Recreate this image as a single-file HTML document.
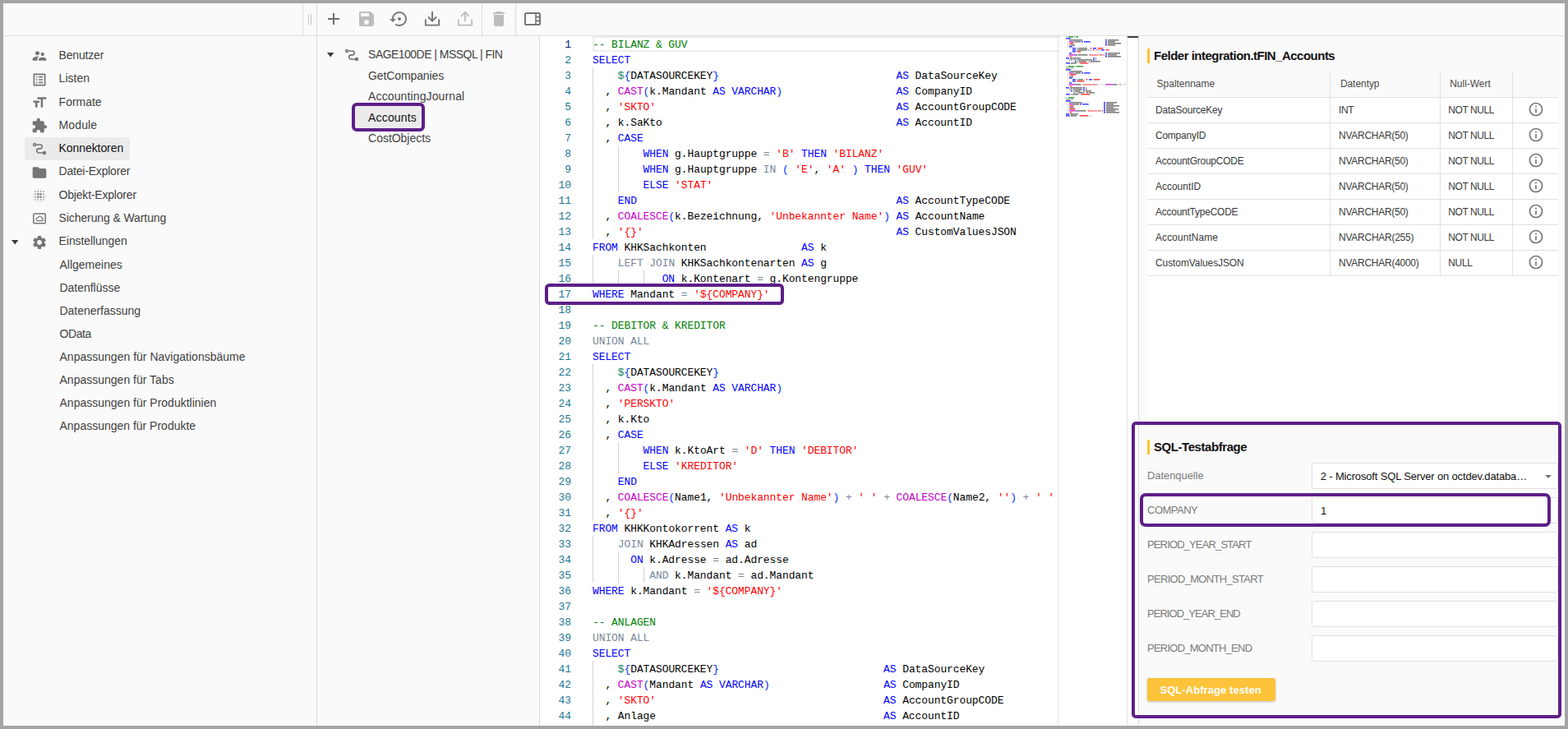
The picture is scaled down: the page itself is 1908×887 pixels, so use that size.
<!DOCTYPE html>
<html lang="de"><head><meta charset="utf-8"><title>Konnektoren</title>
<style>
*{box-sizing:border-box}
html,body{margin:0;padding:0}
body{width:1908px;height:887px;overflow:hidden;background:#a5a5a5;font-family:"Liberation Sans", Arial, sans-serif;position:relative}
#app{position:absolute;left:4px;top:4px;width:1900px;height:879px;background:#fafafa;overflow:hidden}
#root{position:absolute;left:0;top:0;width:1908px;height:887px;overflow:hidden}
.t{position:absolute;white-space:pre;line-height:20px;height:20px;font-size:14px}
.b{position:absolute}
.vl{position:absolute;width:1px;background:#dcdcdc}
.hl{position:absolute;height:1px;background:#dcdcdc}
svg{position:absolute;overflow:visible}
#ed{position:absolute;left:657px;top:44px;width:714px;height:839px;background:#fff;overflow:hidden}
.ln{position:absolute;left:0;width:38px;text-align:right;color:#237893;font:13px/19px "Liberation Mono", "DejaVu Sans Mono", monospace;height:19px;white-space:pre;letter-spacing:-0.1px}
.cl{position:absolute;left:64px;color:#000;font:13px/19px "Liberation Mono", "DejaVu Sans Mono", monospace;height:19px;white-space:pre;letter-spacing:-0.104px}
.cl i{font-style:normal}
.kw{color:#0000ff}.op{color:#778899}.fn{color:#c700c7}.str{color:#ff0000}.com{color:#008000}.br{color:#0431fa}.num{color:#098658}
.ig{position:absolute;width:1px;height:19px;background:#d3d3d3}
.inp{position:absolute;left:1596px;width:300px;height:32px;background:#fff;border:1px solid #e0e0e0;border-radius:3px}
</style></head>
<body>
<div id="app"></div>
<div id="root">
<header id="toolbar">
<div class="hl" style="left:4px;top:43px;width:1900px;background:#dedede"></div>
<div class="vl" style="left:368px;top:4px;height:40px"></div>
<div class="vl" style="left:385px;top:4px;height:879px"></div>
<div class="vl" style="left:586px;top:4px;height:40px"></div>
<div class="vl" style="left:627px;top:4px;height:40px"></div>
<div class="vl" style="left:656px;top:44px;height:839px"></div>
<div class="b" style="left:375px;top:17px;width:1px;height:13px;background:#c4c4c4"></div><div class="b" style="left:378px;top:17px;width:1px;height:13px;background:#c4c4c4"></div>
<svg style="left:394px;top:11px" width="24" height="24" viewBox="0 0 24 24"><path fill="#6e6e6e" d="M19 13h-6v6h-2v-6H5v-2h6V5h2v6h6v2z"/></svg>
<svg style="left:434px;top:11px" width="24" height="24" viewBox="0 0 24 24"><path fill="#bdbdbd" d="M17 3H5c-1.11 0-2 .9-2 2v14c0 1.1.89 2 2 2h14c1.1 0 2-.9 2-2V7l-4-4zm-5 16c-1.66 0-3-1.34-3-3s1.34-3 3-3 3 1.34 3 3-1.34 3-3 3zm3-10H5V5h10v4z"/></svg>
<svg style="left:474px;top:11px" width="24" height="24" viewBox="0 0 24 24"><path fill="#7a7a7a" d="M14 12c0-1.1-.9-2-2-2s-2 .9-2 2 .9 2 2 2 2-.9 2-2zm-2-9c-4.97 0-9 4.03-9 9H0l4 4 4-4H5c0-3.87 3.13-7 7-7s7 3.13 7 7-3.13 7-7 7c-1.51 0-2.91-.49-4.06-1.3l-1.42 1.44C8.04 20.3 9.94 21 12 21c4.97 0 9-4.03 9-9s-4.03-9-9-9z"/></svg>
<svg style="left:516px;top:13px" width="20" height="20" viewBox="0 0 20 20" fill="none" stroke="#757575" stroke-width="1.9" stroke-linecap="round" stroke-linejoin="round"><path d="M1.9 11.2v6.4h16.2v-6.4"/><path d="M10 1.8v10.6"/><path d="M5.6 8l4.4 4.6L14.4 8"/></svg>
<svg style="left:556px;top:13px" width="20" height="20" viewBox="0 0 20 20" fill="none" stroke="#bdbdbd" stroke-width="1.9" stroke-linecap="round" stroke-linejoin="round"><path d="M1.9 11.2v6.4h16.2v-6.4"/><path d="M10 12.6V2"/><path d="M5.6 6.4L10 1.9l4.4 4.5"/></svg>
<svg style="left:595px;top:11px" width="24" height="24" viewBox="0 0 24 24"><path fill="#bdbdbd" d="M6 19c0 1.1.9 2 2 2h8c1.1 0 2-.9 2-2V7H6v12zM19 4h-3.5l-1-1h-5l-1 1H5v2h14V4z"/></svg>
<svg style="left:638px;top:15px" width="20" height="16" viewBox="0 0 20 16"><rect x="1" y="1" width="18" height="14" rx="1.6" fill="none" stroke="#757575" stroke-width="2"/><path d="M14 1v14M14 5.6h5M14 10.4h5" fill="none" stroke="#757575" stroke-width="1.6"/></svg>
</header>
<nav id="nav">
<div class="b" style="left:30px;top:167px;width:128px;height:28px;border-radius:4px;background:#ebebeb"></div>
<svg style="left:38px;top:58px" width="20" height="20" viewBox="0 0 24 24"><path fill="#757575" d="M16.5 12c1.38 0 2.49-1.12 2.49-2.5S17.88 7 16.5 7C15.12 7 14 8.12 14 9.5s1.12 2.5 2.5 2.5zM9 11c1.66 0 2.99-1.34 2.99-3S10.66 5 9 5C7.34 5 6 6.34 6 8s1.34 3 3 3zm7.5 3c-1.83 0-5.5.92-5.5 2.75V19h11v-2.25c0-1.83-3.67-2.75-5.5-2.75zM9 13c-2.33 0-7 1.17-7 3.5V19h7v-2.25c0-.85.33-2.34 2.37-3.47C10.5 13.1 9.66 13 9 13z"/></svg>
<svg style="left:38px;top:87px" width="20" height="20" viewBox="0 0 24 24"><path fill="#757575" d="M19 5v14H5V5h14m1.1-2H3.9c-.5 0-.9.4-.9.9v16.2c0 .4.4.9.9.9h16.2c.4 0 .9-.5.9-.9V3.9c0-.5-.5-.9-.9-.9zM11 7h6v2h-6V7zm0 4h6v2h-6v-2zm0 4h6v2h-6zM7 7h2v2H7zm0 4h2v2H7zm0 4h2v2H7z"/></svg>
<svg style="left:38px;top:115px" width="20" height="20" viewBox="0 0 24 24"><path fill="#757575" d="M9 4v3h5v12h3V7h5V4H9zm-6 8h3v7h3v-7h3V9H3v3z"/></svg>
<svg style="left:38px;top:143px" width="20" height="20" viewBox="0 0 24 24"><path fill="#757575" d="M20.5 11H19V7c0-1.1-.9-2-2-2h-4V3.5C13 2.12 11.88 1 10.5 1S8 2.12 8 3.5V5H4c-1.1 0-1.99.9-1.99 2v3.8H3.5c1.49 0 2.7 1.21 2.7 2.7s-1.21 2.7-2.7 2.7H2V20c0 1.1.9 2 2 2h3.8v-1.5c0-1.49 1.21-2.7 2.7-2.7 1.49 0 2.7 1.21 2.7 2.7V22H17c1.1 0 2-.9 2-2v-4h1.5c1.38 0 2.5-1.12 2.5-2.5S21.88 11 20.5 11z"/></svg>
<svg style="left:38.2px;top:170.8px" width="20" height="20" viewBox="0 0 20 20" fill="none" stroke="#757575"><circle cx="4.1" cy="5" r="1.5" stroke-width="1.5"/><circle cx="16" cy="14.95" r="2.2" fill="#757575" stroke="none"/><path d="M5.8 5H10.75a2.45 2.45 0 0 1 0 4.9H9.3a2.52 2.52 0 0 0 0 5.05H14.5" stroke-width="1.6"/></svg>
<svg style="left:38px;top:200px" width="20" height="20" viewBox="0 0 24 24"><path fill="#757575" d="M10 4H4c-1.1 0-1.99.9-1.99 2L2 18c0 1.1.9 2 2 2h16c1.1 0 2-.9 2-2V8c0-1.1-.9-2-2-2h-8l-2-2z"/></svg>
<svg style="left:38px;top:228px" width="20" height="20" viewBox="0 0 24 24" fill="#757575"><circle cx="6" cy="6" r="1"/><circle cx="6" cy="10" r="1"/><circle cx="6" cy="14" r="1"/><circle cx="6" cy="18" r="1"/><circle cx="10" cy="6" r="1"/><circle cx="10" cy="10" r="1.5"/><circle cx="10" cy="14" r="1.5"/><circle cx="10" cy="18" r="1"/><circle cx="14" cy="6" r="1"/><circle cx="14" cy="10" r="1.5"/><circle cx="14" cy="14" r="1.5"/><circle cx="14" cy="18" r="1"/><circle cx="18" cy="6" r="1"/><circle cx="18" cy="10" r="1"/><circle cx="18" cy="14" r="1"/><circle cx="18" cy="18" r="1"/><circle cx="3" cy="10" r=".5"/><circle cx="21" cy="10" r=".5"/><circle cx="10" cy="3" r=".5"/><circle cx="10" cy="21" r=".5"/><circle cx="3" cy="14" r=".5"/><circle cx="21" cy="14" r=".5"/><circle cx="14" cy="3" r=".5"/><circle cx="14" cy="21" r=".5"/></svg>
<svg style="left:38px;top:256px" width="20" height="20" viewBox="0 0 20 20" fill="none" stroke="#757575"><rect x="2.75" y="3.95" width="14.5" height="11.9" rx="1.3" stroke-width="1.5"/><path d="M7.5 12.6H12.9A1.65 1.65 0 0 0 13.2 9.4A2.6 2.6 0 0 0 8.2 8.9A1.9 1.9 0 0 0 7.5 12.6Z" stroke-width="1.2" stroke-linejoin="round"/></svg>
<svg style="left:38px;top:285px" width="20" height="20" viewBox="0 0 24 24"><path fill="#757575" d="M19.14 12.94c.04-.3.06-.61.06-.94 0-.32-.02-.64-.07-.94l2.03-1.58c.18-.14.23-.41.12-.61l-1.92-3.32c-.12-.22-.37-.29-.59-.22l-2.39.96c-.5-.38-1.03-.7-1.62-.94l-.36-2.54c-.04-.24-.24-.41-.48-.41h-3.84c-.24 0-.43.17-.47.41l-.36 2.54c-.59.24-1.13.57-1.62.94l-2.39-.96c-.22-.08-.47 0-.59.22L2.74 8.87c-.12.21-.08.47.12.61l2.03 1.58c-.05.3-.09.63-.09.94s.02.64.07.94l-2.03 1.58c-.18.14-.23.41-.12.61l1.92 3.32c.12.22.37.29.59.22l2.39-.96c.5.38 1.03.7 1.62.94l.36 2.54c.05.24.24.41.48.41h3.84c.24 0 .44-.17.47-.41l.36-2.54c.59-.24 1.13-.56 1.62-.94l2.39.96c.22.08.47 0 .59-.22l1.92-3.32c.12-.22.07-.47-.12-.61l-2.01-1.58zM12 15.6c-1.98 0-3.6-1.62-3.6-3.6s1.62-3.6 3.6-3.6 3.6 1.62 3.6 3.6-1.62 3.6-3.6 3.6z"/></svg>
<svg style="left:14.1px;top:291.9px" width="8.4" height="5.4" viewBox="0 0 8.4 5.4"><path fill="#3c3c3c" d="M0 0h8.4L4.2 5.4z"/></svg>
<div class="t" style="left:71.6px;top:57px;font-size:14px;color:#414141;letter-spacing:-0.181px;">Benutzer</div>
<div class="t" style="left:71.6px;top:85px;font-size:14px;color:#414141;letter-spacing:0.023px;">Listen</div>
<div class="t" style="left:71.6px;top:114px;font-size:14px;color:#414141;letter-spacing:-0.018px;">Formate</div>
<div class="t" style="left:71.6px;top:142px;font-size:14px;color:#414141;letter-spacing:0.113px;">Module</div>
<div class="t" style="left:71.6px;top:170px;font-size:14px;color:#111;letter-spacing:-0.082px;">Konnektoren</div>
<div class="t" style="left:71.6px;top:198px;font-size:14px;color:#414141;letter-spacing:-0.206px;">Datei-Explorer</div>
<div class="t" style="left:71.6px;top:227px;font-size:14px;color:#414141;letter-spacing:-0.198px;">Objekt-Explorer</div>
<div class="t" style="left:71.6px;top:255px;font-size:14px;color:#414141;letter-spacing:-0.103px;">Sicherung &amp; Wartung</div>
<div class="t" style="left:71.6px;top:283px;font-size:14px;color:#414141;letter-spacing:-0.082px;">Einstellungen</div>
<div class="t" style="left:72.5px;top:312px;font-size:14px;color:#414141;letter-spacing:-0.006px;">Allgemeines</div>
<div class="t" style="left:72.5px;top:340px;font-size:14px;color:#414141;letter-spacing:-0.022px;">Datenflüsse</div>
<div class="t" style="left:72.5px;top:368px;font-size:14px;color:#414141;letter-spacing:-0.032px;">Datenerfassung</div>
<div class="t" style="left:72.5px;top:396px;font-size:14px;color:#414141;letter-spacing:-0.434px;">OData</div>
<div class="t" style="left:72.5px;top:424px;font-size:14px;color:#414141;letter-spacing:0.012px;">Anpassungen für Navigationsbäume</div>
<div class="t" style="left:72.5px;top:452px;font-size:14px;color:#414141;letter-spacing:0.006px;">Anpassungen für Tabs</div>
<div class="t" style="left:72.5px;top:480px;font-size:14px;color:#414141;letter-spacing:0.004px;">Anpassungen für Produktlinien</div>
<div class="t" style="left:72.5px;top:508px;font-size:14px;color:#414141;letter-spacing:-0.008px;">Anpassungen für Produkte</div>
</nav>
<section id="tree">
<div class="b" style="left:432px;top:129px;width:81px;height:27px;border-radius:3px;background:#ebebeb"></div>
<svg style="left:397.9px;top:64.1px" width="8.4" height="5.4" viewBox="0 0 8.4 5.4"><path fill="#3c3c3c" d="M0 0h8.4L4.2 5.4z"/></svg>
<svg style="left:418px;top:57px" width="20" height="20" viewBox="0 0 20 20" fill="none" stroke="#757575"><circle cx="4.1" cy="5" r="1.5" stroke-width="1.5"/><circle cx="16" cy="14.95" r="2.2" fill="#757575" stroke="none"/><path d="M5.8 5H10.75a2.45 2.45 0 0 1 0 4.9H9.3a2.52 2.52 0 0 0 0 5.05H14.5" stroke-width="1.6"/></svg>
<div class="t" style="left:448.1px;top:56px;font-size:14px;color:#414141;letter-spacing:-0.535px;">SAGE100DE | MSSQL | FIN</div>
<div class="t" style="left:448.1px;top:82px;font-size:14px;color:#414141;letter-spacing:-0.116px;">GetCompanies</div>
<div class="t" style="left:448.1px;top:107px;font-size:14px;color:#414141;letter-spacing:0.118px;">AccountingJournal</div>
<div class="t" style="left:448.1px;top:133px;font-size:14px;color:#111;letter-spacing:0.151px;">Accounts</div>
<div class="t" style="left:448.1px;top:158px;font-size:14px;color:#414141;letter-spacing:-0.032px;">CostObjects</div>
</section>
<main id="editor">
<div id="ed">
<div class="b" style="left:64px;top:0;width:580px;height:19px;border:2px solid #eeeeee"></div>
<div class="ln" style="top:1px;color:#0b216f">1</div>
<div class="cl" style="top:1px"><i class="com">-- BILANZ &amp; GUV</i></div>
<div class="ln" style="top:20px">2</div>
<div class="cl" style="top:20px"><i class="kw">SELECT</i></div>
<div class="ig" style="left:64.0px;top:38px"></div>
<div class="ln" style="top:39px">3</div>
<div class="cl" style="top:39px">    <i class="num">$</i><i class="br">{</i>DATASOURCEKEY<i class="br">}                            </i><i class="kw">AS </i>DataSourceKey</div>
<div class="ig" style="left:64.0px;top:57px"></div>
<div class="ln" style="top:58px">4</div>
<div class="cl" style="top:58px">  , <i class="fn">CAST</i><i class="br">(</i>k.Mandant <i class="kw">AS VARCHAR</i><i class="br">)                  </i><i class="kw">AS </i>CompanyID</div>
<div class="ig" style="left:64.0px;top:76px"></div>
<div class="ln" style="top:77px">5</div>
<div class="cl" style="top:77px">  , <i class="str">'SKTO'                                      </i><i class="kw">AS </i>AccountGroupCODE</div>
<div class="ig" style="left:64.0px;top:95px"></div>
<div class="ln" style="top:96px">6</div>
<div class="cl" style="top:96px">  , k.SaKto                                     <i class="kw">AS </i>AccountID</div>
<div class="ig" style="left:64.0px;top:114px"></div>
<div class="ln" style="top:115px">7</div>
<div class="cl" style="top:115px">  , <i class="kw">CASE</i></div>
<div class="ig" style="left:64.0px;top:133px"></div>
<div class="ig" style="left:94.8px;top:133px"></div>
<div class="ln" style="top:134px">8</div>
<div class="cl" style="top:134px">        <i class="kw">WHEN </i>g.Hauptgruppe <i class="op">= </i><i class="str">'B' </i><i class="kw">THEN </i><i class="str">'BILANZ'</i></div>
<div class="ig" style="left:64.0px;top:152px"></div>
<div class="ig" style="left:94.8px;top:152px"></div>
<div class="ln" style="top:153px">9</div>
<div class="cl" style="top:153px">        <i class="kw">WHEN </i>g.Hauptgruppe <i class="op">IN </i><i class="br">( </i><i class="str">'E'</i>, <i class="str">'A' </i><i class="br">) </i><i class="kw">THEN </i><i class="str">'GUV'</i></div>
<div class="ig" style="left:64.0px;top:171px"></div>
<div class="ig" style="left:94.8px;top:171px"></div>
<div class="ln" style="top:172px">10</div>
<div class="cl" style="top:172px">        <i class="kw">ELSE </i><i class="str">'STAT'</i></div>
<div class="ig" style="left:64.0px;top:190px"></div>
<div class="ln" style="top:191px">11</div>
<div class="cl" style="top:191px">    <i class="kw">END                                         AS </i>AccountTypeCODE</div>
<div class="ig" style="left:64.0px;top:209px"></div>
<div class="ln" style="top:210px">12</div>
<div class="cl" style="top:210px">  , <i class="fn">COALESCE</i><i class="br">(</i>k.Bezeichnung, <i class="str">'Unbekannter Name'</i><i class="br">) </i><i class="kw">AS </i>AccountName</div>
<div class="ig" style="left:64.0px;top:228px"></div>
<div class="ln" style="top:229px">13</div>
<div class="cl" style="top:229px">  , <i class="str">'{}'                                        </i><i class="kw">AS </i>CustomValuesJSON</div>
<div class="ln" style="top:248px">14</div>
<div class="cl" style="top:248px"><i class="kw">FROM </i>KHKSachkonten               <i class="kw">AS </i>k</div>
<div class="ig" style="left:64.0px;top:266px"></div>
<div class="ln" style="top:267px">15</div>
<div class="cl" style="top:267px">    <i class="op">LEFT JOIN </i>KHKSachkontenarten <i class="kw">AS </i>g</div>
<div class="ig" style="left:64.0px;top:285px"></div>
<div class="ig" style="left:94.8px;top:285px"></div>
<div class="ig" style="left:125.6px;top:285px"></div>
<div class="ln" style="top:286px">16</div>
<div class="cl" style="top:286px">           <i class="kw">ON </i>k.Kontenart <i class="op">= </i>g.Kontengruppe</div>
<div class="ln" style="top:305px">17</div>
<div class="cl" style="top:305px"><i class="kw">WHERE </i>Mandant <i class="op">= </i><i class="str">'${COMPANY}'</i></div>
<div class="ln" style="top:324px">18</div>
<div class="ln" style="top:343px">19</div>
<div class="cl" style="top:343px"><i class="com">-- DEBITOR &amp; KREDITOR</i></div>
<div class="ln" style="top:362px">20</div>
<div class="cl" style="top:362px"><i class="op">UNION ALL</i></div>
<div class="ln" style="top:381px">21</div>
<div class="cl" style="top:381px"><i class="kw">SELECT</i></div>
<div class="ig" style="left:64.0px;top:399px"></div>
<div class="ln" style="top:400px">22</div>
<div class="cl" style="top:400px">    <i class="num">$</i><i class="br">{</i>DATASOURCEKEY<i class="br">}</i></div>
<div class="ig" style="left:64.0px;top:418px"></div>
<div class="ln" style="top:419px">23</div>
<div class="cl" style="top:419px">  , <i class="fn">CAST</i><i class="br">(</i>k.Mandant <i class="kw">AS VARCHAR</i><i class="br">)</i></div>
<div class="ig" style="left:64.0px;top:437px"></div>
<div class="ln" style="top:438px">24</div>
<div class="cl" style="top:438px">  , <i class="str">'PERSKTO'</i></div>
<div class="ig" style="left:64.0px;top:456px"></div>
<div class="ln" style="top:457px">25</div>
<div class="cl" style="top:457px">  , k.Kto</div>
<div class="ig" style="left:64.0px;top:475px"></div>
<div class="ln" style="top:476px">26</div>
<div class="cl" style="top:476px">  , <i class="kw">CASE</i></div>
<div class="ig" style="left:64.0px;top:494px"></div>
<div class="ig" style="left:94.8px;top:494px"></div>
<div class="ln" style="top:495px">27</div>
<div class="cl" style="top:495px">        <i class="kw">WHEN </i>k.KtoArt <i class="op">= </i><i class="str">'D' </i><i class="kw">THEN </i><i class="str">'DEBITOR'</i></div>
<div class="ig" style="left:64.0px;top:513px"></div>
<div class="ig" style="left:94.8px;top:513px"></div>
<div class="ln" style="top:514px">28</div>
<div class="cl" style="top:514px">        <i class="kw">ELSE </i><i class="str">'KREDITOR'</i></div>
<div class="ig" style="left:64.0px;top:532px"></div>
<div class="ln" style="top:533px">29</div>
<div class="cl" style="top:533px">    <i class="kw">END</i></div>
<div class="ig" style="left:64.0px;top:551px"></div>
<div class="ln" style="top:552px">30</div>
<div class="cl" style="top:552px">  , <i class="fn">COALESCE</i><i class="br">(</i>Name1, <i class="str">'Unbekannter Name'</i><i class="br">) </i><i class="op">+ </i><i class="str">' ' </i><i class="op">+ </i><i class="fn">COALESCE</i><i class="br">(</i>Name2, <i class="str">''</i><i class="br">) </i><i class="op">+ </i><i class="str">' ' </i><i class="op">+ </i><i class="fn">COALESCE</i><i class="br">(</i>Ort, <i class="str">''</i><i class="br">)</i></div>
<div class="ig" style="left:64.0px;top:570px"></div>
<div class="ln" style="top:571px">31</div>
<div class="cl" style="top:571px">  , <i class="str">'{}'</i></div>
<div class="ln" style="top:590px">32</div>
<div class="cl" style="top:590px"><i class="kw">FROM </i>KHKKontokorrent <i class="kw">AS </i>k</div>
<div class="ig" style="left:64.0px;top:608px"></div>
<div class="ln" style="top:609px">33</div>
<div class="cl" style="top:609px">    <i class="op">JOIN </i>KHKAdressen <i class="kw">AS </i>ad</div>
<div class="ig" style="left:64.0px;top:627px"></div>
<div class="ig" style="left:94.8px;top:627px"></div>
<div class="ln" style="top:628px">34</div>
<div class="cl" style="top:628px">      <i class="kw">ON </i>k.Adresse <i class="op">= </i>ad.Adresse</div>
<div class="ig" style="left:64.0px;top:646px"></div>
<div class="ig" style="left:94.8px;top:646px"></div>
<div class="ig" style="left:125.6px;top:646px"></div>
<div class="ln" style="top:647px">35</div>
<div class="cl" style="top:647px">         <i class="op">AND </i>k.Mandant <i class="op">= </i>ad.Mandant</div>
<div class="ln" style="top:666px">36</div>
<div class="cl" style="top:666px"><i class="kw">WHERE </i>k.Mandant <i class="op">= </i><i class="str">'${COMPANY}'</i></div>
<div class="ln" style="top:685px">37</div>
<div class="ln" style="top:704px">38</div>
<div class="cl" style="top:704px"><i class="com">-- ANLAGEN</i></div>
<div class="ln" style="top:723px">39</div>
<div class="cl" style="top:723px"><i class="op">UNION ALL</i></div>
<div class="ln" style="top:742px">40</div>
<div class="cl" style="top:742px"><i class="kw">SELECT</i></div>
<div class="ig" style="left:64.0px;top:760px"></div>
<div class="ln" style="top:761px">41</div>
<div class="cl" style="top:761px">    <i class="num">$</i><i class="br">{</i>DATASOURCEKEY<i class="br">}                          </i><i class="kw">AS </i>DataSourceKey</div>
<div class="ig" style="left:64.0px;top:779px"></div>
<div class="ln" style="top:780px">42</div>
<div class="cl" style="top:780px">  , <i class="fn">CAST</i><i class="br">(</i>Mandant <i class="kw">AS VARCHAR</i><i class="br">)                  </i><i class="kw">AS </i>CompanyID</div>
<div class="ig" style="left:64.0px;top:798px"></div>
<div class="ln" style="top:799px">43</div>
<div class="cl" style="top:799px">  , <i class="str">'SKTO'                                    </i><i class="kw">AS </i>AccountGroupCODE</div>
<div class="ig" style="left:64.0px;top:817px"></div>
<div class="ln" style="top:818px">44</div>
<div class="cl" style="top:818px">  , Anlage                                    <i class="kw">AS </i>AccountID</div>
<div class="ig" style="left:64.0px;top:836px"></div>
<div class="ln" style="top:837px">45</div>
<div class="cl" style="top:837px">  , <i class="str">'ANLAGE'                                  </i><i class="kw">AS </i>AccountTypeCODE</div>
<div class="b" style="left:632px;top:0;width:82px;height:839px;background:#fff"></div>
<div class="b" style="left:626px;top:0;width:6px;height:839px;box-shadow:#dddddd -6px 0 6px -6px inset"></div>
<svg style="left:640px;top:0" width="74" height="100" viewBox="0 0 74 100" shape-rendering="crispEdges" fill="none"><path stroke="#008000" stroke-opacity="0.3" d="M0 0.5h2M0 36.5h2M0 74.5h2"/><path stroke="#008000" stroke-opacity="0.1" d="M0 1.5h2M0 37.5h2M0 75.5h2"/><path stroke="#008000" stroke-opacity="0.72" d="M3 0.5h6M10 0.5h1M12 0.5h3M3 36.5h7M11 36.5h1M13 36.5h8M3 74.5h7"/><path stroke="#008000" stroke-opacity="0.42" d="M3 1.5h6M10 1.5h1M12 1.5h3M3 37.5h7M11 37.5h1M13 37.5h8M3 75.5h7"/><path stroke="#0000ff" stroke-opacity="0.72" d="M0 2.5h6M48 4.5h2M19 6.5h2M22 6.5h7M48 6.5h2M48 8.5h2M48 10.5h2M4 12.5h4M8 14.5h4M33 14.5h4M8 16.5h4M43 16.5h4M8 18.5h4M4 20.5h3M48 20.5h2M48 22.5h2M48 24.5h2M0 26.5h4M33 26.5h2M33 28.5h2M11 30.5h2M0 32.5h5M0 40.5h6M19 44.5h2M22 44.5h7M4 50.5h4M8 52.5h4M28 52.5h4M8 54.5h4M4 56.5h3M0 62.5h4M21 62.5h2M21 64.5h2M6 66.5h2M0 70.5h5M0 78.5h6M46 80.5h2M17 82.5h2M20 82.5h7M46 82.5h2M46 84.5h2M46 86.5h2M46 88.5h2M46 90.5h2M46 92.5h2M0 94.5h4M0 96.5h5"/><path stroke="#0000ff" stroke-opacity="0.42" d="M0 3.5h6M48 5.5h2M19 7.5h2M22 7.5h7M48 7.5h2M48 9.5h2M48 11.5h2M4 13.5h4M8 15.5h4M33 15.5h4M8 17.5h4M43 17.5h4M8 19.5h4M4 21.5h3M48 21.5h2M48 23.5h2M48 25.5h2M0 27.5h4M33 27.5h2M33 29.5h2M11 31.5h2M0 33.5h5M0 41.5h6M19 45.5h2M22 45.5h7M4 51.5h4M8 53.5h4M28 53.5h4M8 55.5h4M4 57.5h3M0 63.5h4M21 63.5h2M21 65.5h2M6 67.5h2M0 71.5h5M0 79.5h6M46 81.5h2M17 83.5h2M20 83.5h7M46 83.5h2M46 85.5h2M46 87.5h2M46 89.5h2M46 91.5h2M46 93.5h2M0 95.5h4M0 97.5h5"/><path stroke="#098658" stroke-opacity="0.72" d="M4 4.5h1M4 42.5h1M4 80.5h1"/><path stroke="#098658" stroke-opacity="0.42" d="M4 5.5h1M4 43.5h1M4 81.5h1"/><path stroke="#0431fa" stroke-opacity="0.45" d="M5 4.5h1M19 4.5h1M5 5.5h1M19 5.5h1M8 6.5h1M29 6.5h1M8 7.5h1M29 7.5h1M30 16.5h1M41 16.5h1M30 17.5h1M41 17.5h1M12 22.5h1M46 22.5h1M12 23.5h1M46 23.5h1M5 42.5h1M19 42.5h1M5 43.5h1M19 43.5h1M8 44.5h1M29 44.5h1M8 45.5h1M29 45.5h1M12 58.5h1M38 58.5h1M56 58.5h1M66 58.5h1M12 59.5h1M38 59.5h1M56 59.5h1M66 59.5h1M5 80.5h1M19 80.5h1M5 81.5h1M19 81.5h1M8 82.5h1M27 82.5h1M8 83.5h1M27 83.5h1M12 90.5h1M44 90.5h1M12 91.5h1M44 91.5h1"/><path stroke="#000000" stroke-opacity="0.5" d="M6 4.5h13M51 4.5h13M9 6.5h1M11 6.5h7M51 6.5h9M51 8.5h16M4 10.5h1M6 10.5h5M51 10.5h9M13 14.5h1M15 14.5h11M13 16.5h1M15 16.5h11M51 20.5h15M13 22.5h1M15 22.5h11M51 22.5h11M51 24.5h16M5 26.5h13M36 26.5h1M14 28.5h18M36 28.5h1M14 30.5h1M16 30.5h9M28 30.5h1M30 30.5h12M6 32.5h7M6 42.5h13M9 44.5h1M11 44.5h7M4 48.5h1M6 48.5h3M13 52.5h1M15 52.5h6M13 58.5h5M57 58.5h5M5 62.5h15M24 62.5h1M9 64.5h11M24 64.5h2M9 66.5h1M11 66.5h7M21 66.5h2M24 66.5h7M13 68.5h1M15 68.5h7M25 68.5h2M28 68.5h7M6 70.5h1M8 70.5h7M6 80.5h13M49 80.5h13M9 82.5h7M49 82.5h9M49 84.5h16M4 86.5h6M49 86.5h9M49 88.5h15M13 90.5h11M49 90.5h11M49 92.5h16M5 94.5h10M6 96.5h7"/><path stroke="#000000" stroke-opacity="0.3" d="M6 5.5h13M51 5.5h13M9 7.5h1M11 7.5h7M51 7.5h9M51 9.5h16M4 11.5h1M6 11.5h5M51 11.5h9M13 15.5h1M15 15.5h11M13 17.5h1M15 17.5h11M51 21.5h15M13 23.5h1M15 23.5h11M51 23.5h11M51 25.5h16M5 27.5h13M36 27.5h1M14 29.5h18M36 29.5h1M14 31.5h1M16 31.5h9M28 31.5h1M30 31.5h12M6 33.5h7M6 43.5h13M9 45.5h1M11 45.5h7M4 49.5h1M6 49.5h3M13 53.5h1M15 53.5h6M13 59.5h5M57 59.5h5M5 63.5h15M24 63.5h1M9 65.5h11M24 65.5h2M9 67.5h1M11 67.5h7M21 67.5h2M24 67.5h7M13 69.5h1M15 69.5h7M25 69.5h2M28 69.5h7M6 71.5h1M8 71.5h7M6 81.5h13M49 81.5h13M9 83.5h7M49 83.5h9M49 85.5h16M4 87.5h6M49 87.5h9M49 89.5h15M13 91.5h11M49 91.5h11M49 93.5h16M5 95.5h10M6 97.5h7"/><path stroke="#000000" stroke-opacity="0.24" d="M2 7.5h1M10 7.5h1M2 9.5h1M2 11.5h1M5 11.5h1M2 13.5h1M14 15.5h1M14 17.5h1M35 17.5h1M2 23.5h1M14 23.5h1M26 23.5h1M2 25.5h1M15 31.5h1M29 31.5h1M2 45.5h1M10 45.5h1M2 47.5h1M2 49.5h1M5 49.5h1M2 51.5h1M14 53.5h1M2 59.5h1M18 59.5h1M62 59.5h1M2 61.5h1M10 67.5h1M23 67.5h1M14 69.5h1M27 69.5h1M7 71.5h1M2 83.5h1M2 85.5h1M2 87.5h1M2 89.5h1M2 91.5h1M24 91.5h1M2 93.5h1M29 96.5h1M29 97.5h1"/><path stroke="#c700c7" stroke-opacity="0.72" d="M4 6.5h4M4 22.5h8M4 44.5h4M4 58.5h8M48 58.5h8M4 82.5h4M4 90.5h8"/><path stroke="#c700c7" stroke-opacity="0.42" d="M4 7.5h4M4 23.5h8M4 45.5h4M4 59.5h8M48 59.5h8M4 83.5h4M4 91.5h8"/><path stroke="#ff0000" stroke-opacity="0.4" d="M4 8.5h1M9 8.5h1M29 14.5h1M31 14.5h1M38 14.5h1M45 14.5h1M32 16.5h1M34 16.5h1M37 16.5h1M39 16.5h1M48 16.5h1M52 16.5h1M13 18.5h1M18 18.5h1M28 22.5h1M30 22.5h10M42 22.5h4M4 24.5h1M7 24.5h1M16 32.5h1M27 32.5h1M4 46.5h1M12 46.5h1M24 52.5h1M26 52.5h1M33 52.5h1M41 52.5h1M13 54.5h1M22 54.5h1M20 58.5h1M22 58.5h10M34 58.5h4M42 58.5h1M44 58.5h1M64 58.5h2M70 58.5h1M72 58.5h1M4 60.5h1M7 60.5h1M18 70.5h1M29 70.5h1M4 84.5h1M9 84.5h1M4 88.5h1M11 88.5h1M26 90.5h1M28 90.5h10M40 90.5h4M4 92.5h1M7 92.5h1M16 96.5h1M27 96.5h1"/><path stroke="#ff0000" stroke-opacity="0.72" d="M5 8.5h4M30 14.5h1M39 14.5h6M33 16.5h1M38 16.5h1M49 16.5h3M14 18.5h4M29 22.5h1M41 22.5h1M17 32.5h1M19 32.5h7M5 46.5h7M25 52.5h1M34 52.5h7M14 54.5h8M21 58.5h1M33 58.5h1M19 70.5h1M21 70.5h7M5 84.5h4M5 88.5h6M27 90.5h1M39 90.5h1M17 96.5h1M19 96.5h7"/><path stroke="#ff0000" stroke-opacity="0.42" d="M5 9.5h4M30 15.5h1M39 15.5h6M33 17.5h1M38 17.5h1M49 17.5h3M14 19.5h4M29 23.5h1M41 23.5h1M17 33.5h1M19 33.5h7M5 47.5h7M25 53.5h1M34 53.5h7M14 55.5h8M21 59.5h1M33 59.5h1M19 71.5h1M21 71.5h7M5 85.5h4M5 89.5h6M27 91.5h1M39 91.5h1M17 97.5h1M19 97.5h7"/><path stroke="#778899" stroke-opacity="0.3" d="M27 14.5h1M26 30.5h1M14 32.5h1M22 52.5h1M40 58.5h1M46 58.5h1M68 58.5h1M19 66.5h1M23 68.5h1M16 70.5h1M14 96.5h1"/><path stroke="#778899" stroke-opacity="0.1" d="M27 15.5h1M26 31.5h1M14 33.5h1M22 53.5h1M40 59.5h1M46 59.5h1M68 59.5h1M19 67.5h1M23 69.5h1M16 71.5h1M14 97.5h1"/><path stroke="#778899" stroke-opacity="0.72" d="M27 16.5h2M4 28.5h4M9 28.5h4M0 38.5h5M6 38.5h3M4 64.5h4M9 68.5h3M0 76.5h5M6 76.5h3"/><path stroke="#778899" stroke-opacity="0.42" d="M27 17.5h2M4 29.5h4M9 29.5h4M0 39.5h5M6 39.5h3M4 65.5h4M9 69.5h3M0 77.5h5M6 77.5h3"/><path stroke="#ff0000" stroke-opacity="0.34" d="M30 23.5h10M42 23.5h3M22 59.5h10M34 59.5h3M28 91.5h10M40 91.5h3"/><path stroke="#ff0000" stroke-opacity="0.45" d="M5 24.5h2M5 25.5h2M18 32.5h1M26 32.5h1M18 33.5h1M26 33.5h1M5 60.5h2M5 61.5h2M20 70.5h1M28 70.5h1M20 71.5h1M28 71.5h1M5 92.5h2M5 93.5h2M18 96.5h1M26 96.5h1M18 97.5h1M26 97.5h1"/></svg>
</div>
<div class="vl" style="left:1371px;top:44px;height:839px;background:#e4e4e4"></div>
<div class="b" style="left:1372px;top:44px;width:13px;height:839px;background:#fff"></div>
<div class="b" style="left:1372px;top:44px;width:13px;height:2px;background:#424242"></div>
<div class="vl" style="left:1385px;top:44px;height:839px"></div>
</main>
<aside id="panel">
<div class="b" style="left:1396px;top:59px;width:3px;height:18px;background:#fdc334"></div>
<div class="b" style="left:1396px;top:535px;width:3px;height:18px;background:#fdc334"></div>
<div class="b" style="left:1396px;top:119px;width:500px;height:396px;background:#fff"></div>
<div class="hl" style="left:1396px;top:118px;width:500px;background:#e0e0e0"></div>
<div class="hl" style="left:1396px;top:149px;width:500px;background:#e0e0e0"></div>
<div class="hl" style="left:1396px;top:180px;width:500px;background:#e0e0e0"></div>
<div class="hl" style="left:1396px;top:211px;width:500px;background:#e0e0e0"></div>
<div class="hl" style="left:1396px;top:242px;width:500px;background:#e0e0e0"></div>
<div class="hl" style="left:1396px;top:273px;width:500px;background:#e0e0e0"></div>
<div class="hl" style="left:1396px;top:304px;width:500px;background:#e0e0e0"></div>
<div class="hl" style="left:1396px;top:335px;width:500px;background:#e0e0e0"></div>
<div class="vl" style="left:1618px;top:87px;height:249px;background:#e0e0e0"></div>
<div class="vl" style="left:1752px;top:87px;height:249px;background:#e0e0e0"></div>
<div class="vl" style="left:1840px;top:87px;height:249px;background:#e0e0e0"></div>
<svg style="left:1859px;top:123px" width="20" height="20" viewBox="0 0 24 24"><path fill="#757575" d="M11 7h2v2h-2zm0 4h2v6h-2zm1-9C6.48 2 2 6.48 2 12s4.48 10 10 10 10-4.48 10-10S17.52 2 12 2zm0 18c-4.41 0-8-3.59-8-8s3.59-8 8-8 8 3.59 8 8-3.59 8-8 8z"/></svg>
<svg style="left:1859px;top:154px" width="20" height="20" viewBox="0 0 24 24"><path fill="#757575" d="M11 7h2v2h-2zm0 4h2v6h-2zm1-9C6.48 2 2 6.48 2 12s4.48 10 10 10 10-4.48 10-10S17.52 2 12 2zm0 18c-4.41 0-8-3.59-8-8s3.59-8 8-8 8 3.59 8 8-3.59 8-8 8z"/></svg>
<svg style="left:1859px;top:185px" width="20" height="20" viewBox="0 0 24 24"><path fill="#757575" d="M11 7h2v2h-2zm0 4h2v6h-2zm1-9C6.48 2 2 6.48 2 12s4.48 10 10 10 10-4.48 10-10S17.52 2 12 2zm0 18c-4.41 0-8-3.59-8-8s3.59-8 8-8 8 3.59 8 8-3.59 8-8 8z"/></svg>
<svg style="left:1859px;top:216px" width="20" height="20" viewBox="0 0 24 24"><path fill="#757575" d="M11 7h2v2h-2zm0 4h2v6h-2zm1-9C6.48 2 2 6.48 2 12s4.48 10 10 10 10-4.48 10-10S17.52 2 12 2zm0 18c-4.41 0-8-3.59-8-8s3.59-8 8-8 8 3.59 8 8-3.59 8-8 8z"/></svg>
<svg style="left:1859px;top:247px" width="20" height="20" viewBox="0 0 24 24"><path fill="#757575" d="M11 7h2v2h-2zm0 4h2v6h-2zm1-9C6.48 2 2 6.48 2 12s4.48 10 10 10 10-4.48 10-10S17.52 2 12 2zm0 18c-4.41 0-8-3.59-8-8s3.59-8 8-8 8 3.59 8 8-3.59 8-8 8z"/></svg>
<svg style="left:1859px;top:278px" width="20" height="20" viewBox="0 0 24 24"><path fill="#757575" d="M11 7h2v2h-2zm0 4h2v6h-2zm1-9C6.48 2 2 6.48 2 12s4.48 10 10 10 10-4.48 10-10S17.52 2 12 2zm0 18c-4.41 0-8-3.59-8-8s3.59-8 8-8 8 3.59 8 8-3.59 8-8 8z"/></svg>
<svg style="left:1859px;top:309px" width="20" height="20" viewBox="0 0 24 24"><path fill="#757575" d="M11 7h2v2h-2zm0 4h2v6h-2zm1-9C6.48 2 2 6.48 2 12s4.48 10 10 10 10-4.48 10-10S17.52 2 12 2zm0 18c-4.41 0-8-3.59-8-8s3.59-8 8-8 8 3.59 8 8-3.59 8-8 8z"/></svg>
<div class="inp" style="top:563px"></div>
<div class="inp" style="top:605px"></div>
<div class="inp" style="top:647px"></div>
<div class="inp" style="top:689px"></div>
<div class="inp" style="top:731px"></div>
<div class="inp" style="top:773px"></div>
<svg style="left:1880px;top:578px" width="8" height="4" viewBox="0 0 8 4"><path fill="#757575" d="M0 0h8L4 4z"/></svg>
<div class="b" style="left:1896px;top:44px;width:8px;height:839px;background:#fafafa"></div>
<div class="b" style="left:1396px;top:825px;width:156px;height:28px;border-radius:3px;background:#fdc43b;box-shadow:0 1px 3px rgba(0,0,0,.24)"></div>
<div class="t" style="left:1404.1px;top:58px;font-size:15px;color:#111;letter-spacing:-0.519px;font-weight:700;">Felder integration.tFIN_Accounts</div>
<div class="t" style="left:1407.6px;top:92px;font-size:12px;color:#4a4a4a;letter-spacing:-0.020px;">Spaltenname</div>
<div class="t" style="left:1630.9px;top:92px;font-size:12px;color:#4a4a4a;letter-spacing:-0.054px;">Datentyp</div>
<div class="t" style="left:1764.2px;top:92px;font-size:12px;color:#4a4a4a;letter-spacing:-0.020px;">Null-Wert</div>
<div class="t" style="left:1406.0px;top:124px;font-size:12px;color:#3a3a3a;letter-spacing:-0.219px;">DataSourceKey</div>
<div class="t" style="left:1629.1px;top:124px;font-size:12px;color:#3a3a3a;letter-spacing:-0.448px;">INT</div>
<div class="t" style="left:1762.3px;top:124px;font-size:12px;color:#3a3a3a;letter-spacing:-0.418px;">NOT NULL</div>
<div class="t" style="left:1406.0px;top:155px;font-size:12px;color:#3a3a3a;letter-spacing:-0.240px;">CompanyID</div>
<div class="t" style="left:1629.1px;top:155px;font-size:12px;color:#3a3a3a;letter-spacing:-0.283px;">NVARCHAR(50)</div>
<div class="t" style="left:1762.3px;top:155px;font-size:12px;color:#3a3a3a;letter-spacing:-0.418px;">NOT NULL</div>
<div class="t" style="left:1406.0px;top:186px;font-size:12px;color:#3a3a3a;letter-spacing:-0.243px;">AccountGroupCODE</div>
<div class="t" style="left:1629.1px;top:186px;font-size:12px;color:#3a3a3a;letter-spacing:-0.283px;">NVARCHAR(50)</div>
<div class="t" style="left:1762.3px;top:186px;font-size:12px;color:#3a3a3a;letter-spacing:-0.418px;">NOT NULL</div>
<div class="t" style="left:1406.0px;top:217px;font-size:12px;color:#3a3a3a;letter-spacing:-0.018px;">AccountID</div>
<div class="t" style="left:1629.1px;top:217px;font-size:12px;color:#3a3a3a;letter-spacing:-0.283px;">NVARCHAR(50)</div>
<div class="t" style="left:1762.3px;top:217px;font-size:12px;color:#3a3a3a;letter-spacing:-0.418px;">NOT NULL</div>
<div class="t" style="left:1406.0px;top:248px;font-size:12px;color:#3a3a3a;letter-spacing:-0.250px;">AccountTypeCODE</div>
<div class="t" style="left:1629.1px;top:248px;font-size:12px;color:#3a3a3a;letter-spacing:-0.283px;">NVARCHAR(50)</div>
<div class="t" style="left:1762.3px;top:248px;font-size:12px;color:#3a3a3a;letter-spacing:-0.418px;">NOT NULL</div>
<div class="t" style="left:1406.0px;top:279px;font-size:12px;color:#3a3a3a;letter-spacing:0.066px;">AccountName</div>
<div class="t" style="left:1629.1px;top:279px;font-size:12px;color:#3a3a3a;letter-spacing:-0.259px;">NVARCHAR(255)</div>
<div class="t" style="left:1762.3px;top:279px;font-size:12px;color:#3a3a3a;letter-spacing:-0.418px;">NOT NULL</div>
<div class="t" style="left:1406.0px;top:310px;font-size:12px;color:#3a3a3a;letter-spacing:-0.091px;">CustomValuesJSON</div>
<div class="t" style="left:1629.1px;top:310px;font-size:12px;color:#3a3a3a;letter-spacing:-0.267px;">NVARCHAR(4000)</div>
<div class="t" style="left:1762.3px;top:310px;font-size:12px;color:#3a3a3a;letter-spacing:-0.372px;">NULL</div>
<div class="t" style="left:1404.0px;top:534px;font-size:15px;color:#111;letter-spacing:-0.437px;font-weight:700;">SQL-Testabfrage</div>
<div class="t" style="left:1396.0px;top:569px;font-size:13px;color:#7a7a7a;letter-spacing:-0.072px;">Datenquelle</div>
<div class="t" style="left:1396.0px;top:611px;font-size:13px;color:#7a7a7a;letter-spacing:-0.509px;">COMPANY</div>
<div class="t" style="left:1396.0px;top:653px;font-size:13px;color:#7a7a7a;letter-spacing:-0.860px;">PERIOD_YEAR_START</div>
<div class="t" style="left:1396.0px;top:695px;font-size:13px;color:#7a7a7a;letter-spacing:-0.693px;">PERIOD_MONTH_START</div>
<div class="t" style="left:1396.0px;top:737px;font-size:13px;color:#7a7a7a;letter-spacing:-0.957px;">PERIOD_YEAR_END</div>
<div class="t" style="left:1396.0px;top:779px;font-size:13px;color:#7a7a7a;letter-spacing:-0.758px;">PERIOD_MONTH_END</div>
<div class="t" style="left:1606.8px;top:570px;font-size:13px;color:#111;letter-spacing:-0.161px;">2 - Microsoft SQL Server on octdev.databa…</div>
<div class="t" style="left:1607.1px;top:612px;font-size:13px;color:#111;letter-spacing:-0.493px;">1</div>
<div class="t" style="left:1411.4px;top:830px;font-size:13px;color:#fff;letter-spacing:0.073px;font-weight:700;">SQL-Abfrage testen</div>
</aside>
<div id="notes">
<div class="b" style="left:428px;top:125px;width:89px;height:35px;border:4px solid #5e1f88;border-radius:6px"></div>
<div class="b" style="left:663px;top:345px;width:291px;height:26px;border:4px solid #5e1f88;border-radius:5.5px"></div>
<div class="b" style="left:1377px;top:513px;width:523px;height:361px;border:4px solid #5e1f88;border-radius:5px"></div>
<div class="b" style="left:1387px;top:600px;width:500px;height:41px;border:4px solid #5e1f88;border-radius:7px"></div>
</div>
</div>
</body></html>
